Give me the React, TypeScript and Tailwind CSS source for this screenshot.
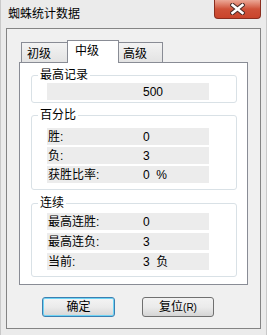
export default function App() {
    // 中级 tab stats
    const pct = [
        { label: '胜:', value: '0' },
        { label: '负:', value: '3' },
        { label: '获胜比率:', value: '0  %' },
    ];
    const streak = [
        { label: '最高连胜:', value: '0' },
        { label: '最高连负:', value: '3' },
        { label: '当前:', value: '3  负' },
    ];

    const Row = ({ label, value }: { label: string; value: string }) => (
        <div className="h-[17px] w-[162px] bg-[#ececec] flex items-center leading-[14px]">
            <span className="w-[96px] pl-[1px]">{label}</span>
            <span className="whitespace-pre">{value}</span>
        </div>
    );

    return (
        <div className="w-[267px] h-[335px] bg-[#ebebeb] border-x border-[#c9c9c9] flex flex-col text-[12px] text-black font-['Liberation_Sans','Noto_Sans_CJK_SC',sans-serif]">
            {/* Title bar */}
            <div className="h-[28px] flex items-start">
                <span className="ml-[7px] mt-[7px] leading-[14px]">蜘蛛统计数据</span>
                <div className="ml-auto mr-[5px] w-[47px] h-[19px] rounded-b-[4px] border border-t-0 border-[#8a2d1e] bg-gradient-to-b from-[#eba897] via-[#cf5239] to-[#c9442b] flex items-center justify-center">
                    <svg width="15" height="12" viewBox="0 0 15 12">
                        <path d="M2.5 2 L12.5 10 M12.5 2 L2.5 10" stroke="#4a2a26" strokeWidth="4.5" strokeLinecap="square" />
                        <path d="M2.5 2 L12.5 10 M12.5 2 L2.5 10" stroke="#ffffff" strokeWidth="2.5" strokeLinecap="square" />
                    </svg>
                </div>
            </div>

            {/* Client area */}
            <div className="mx-[5px] h-[301px] border border-[#848484] bg-[#f0f0f0] flex flex-col">
                {/* Tabs */}
                <div className="ml-[12px] mt-[11px] h-[22px] flex items-end pl-[2px] leading-[14px]">
                    <div className="w-[46px] h-[20px] border-l border-t border-[#898c95] bg-gradient-to-b from-[#f3f3f3] to-[#e3e3e3] pl-[5px] pt-[4px]">初级</div>
                    <div className="relative z-10 -mb-px w-[52px] h-[23px] border-x border-t border-[#898c95] bg-white pl-[7px] pt-[3px]">中级</div>
                    <div className="w-[44px] h-[20px] border-r border-t border-[#898c95] bg-gradient-to-b from-[#f3f3f3] to-[#e3e3e3] pl-[4px] pt-[4px]">高级</div>
                </div>

                {/* Tab panel */}
                <div className="ml-[12px] w-[229px] h-[223px] border border-[#898c95] bg-white flex flex-col">
                    <fieldset className="ml-[11px] mt-[5px] w-[206px] border border-[#d9e1e6] rounded-[3px] pl-[6px] pb-[2px]">
                        <legend className="px-[2px] leading-[14px]">最高记录</legend>
                        <div className="ml-[9px] mt-[1px] h-[17px] w-[162px] bg-[#ececec] flex items-center leading-[14px]">
                            <span className="ml-[96px]">500</span>
                        </div>
                    </fieldset>

                    <fieldset className="ml-[11px] mt-[5px] w-[206px] border border-[#d9e1e6] rounded-[3px] pl-[6px] pb-[6px]">
                        <legend className="px-[2px] leading-[14px]">百分比</legend>
                        <div className="ml-[9px] mt-[6px] flex flex-col gap-[2px]">
                            {pct.map((r) => (
                                <Row key={r.label} label={r.label} value={r.value} />
                            ))}
                        </div>
                    </fieldset>

                    <fieldset className="ml-[11px] mt-[6px] w-[206px] border border-[#d9e1e6] rounded-[3px] pl-[6px] pb-[6px]">
                        <legend className="px-[2px] leading-[14px]">连续</legend>
                        <div className="ml-[9px] mt-[3px] flex flex-col gap-[3px]">
                            {streak.map((r) => (
                                <Row key={r.label} label={r.label} value={r.value} />
                            ))}
                        </div>
                    </fieldset>
                </div>

                {/* Buttons */}
                <div className="mt-[12px] ml-[35px] flex gap-[27px] leading-[14px]">
                    <button className="w-[73px] h-[20px] rounded-[3px] border border-[#3c7fb1] bg-gradient-to-b from-[#f4f4f4] via-[#ebebeb] to-[#d6d6d6] shadow-[inset_0_0_0_1px_#6fd4f5]">
                        确定
                    </button>
                    <button className="w-[72px] h-[20px] rounded-[3px] border border-[#707070] bg-gradient-to-b from-[#f2f2f2] via-[#ebebeb] to-[#d5d5d5]">
                        复位<span className="text-[10px]">(R)</span>
                    </button>
                </div>
            </div>
        </div>
    );
}
